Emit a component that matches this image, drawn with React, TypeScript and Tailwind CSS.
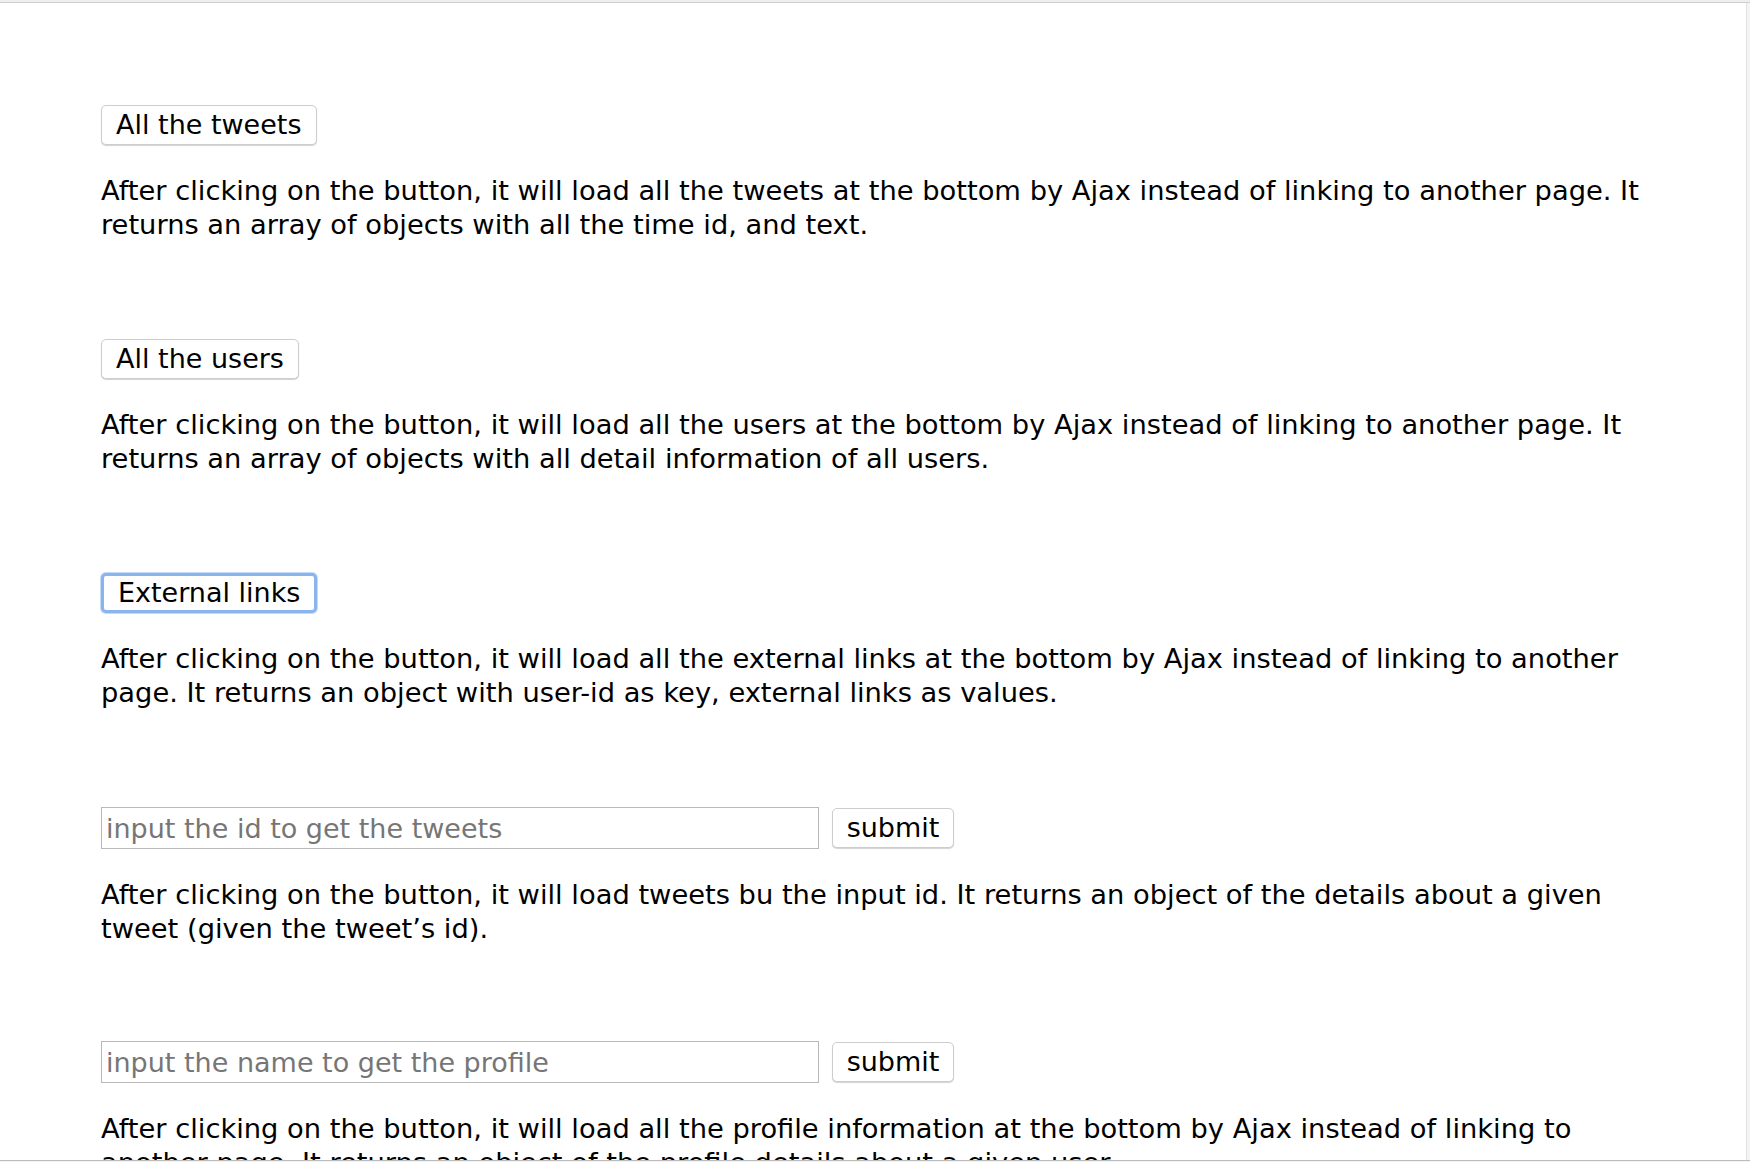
import React from "react";

const font = { fontFamily: '"DejaVu Sans", "Lucida Grande", Verdana, sans-serif' };

const Btn: React.FC<{ label: string; focused?: boolean }> = ({ label, focused }) => (
  <button
    className={
      "h-[40px] rounded-[5px] bg-white px-[14px] pb-[1px] text-[27px] leading-none text-black " +
      (focused
        ? "border-[3px] border-[#8ab4ee] px-[12px] shadow-[0_0_0_1px_#c4daf7]"
        : "border border-[#cdcdcd] shadow-[0_1px_1px_rgba(0,0,0,0.18)]")
    }
  >
    {label}
  </button>
);

const Desc: React.FC<{ children: React.ReactNode }> = ({ children }) => (
  <p className="mt-[29px] w-[1560px] text-[27.3px] leading-[34px] text-black">{children}</p>
);

const Section: React.FC<{ top: React.ReactNode; text: string }> = ({ top, text }) => (
  <section className="h-[234px] shrink-0">
    {top}
    <Desc>{text}</Desc>
  </section>
);

const InputRow: React.FC<{ placeholder: string }> = ({ placeholder }) => (
  <div className="flex items-center gap-[13px]">
    <input
      className="h-[42px] w-[718px] border border-[#b9b9b9] bg-white px-[4px] text-[27px] text-black outline-none placeholder:text-[#767676]"
      placeholder={placeholder}
      style={font}
    />
    <button
      className="h-[40px] w-[122px] rounded-[5px] border border-[#cdcdcd] bg-white pb-[1px] text-[27px] leading-none text-black shadow-[0_1px_1px_rgba(0,0,0,0.18)]"
      style={font}
    >
      submit
    </button>
  </div>
);

export default function App() {
  return (
    <div className="flex h-[1162px] w-[1750px] flex-col overflow-hidden bg-white" style={font}>
      {/* window top edge */}
      <div className="h-[3px] shrink-0 border-b border-[#cfcfcf] bg-[#efefef]" />
      <div className="flex min-h-0 flex-1">
        <main className="min-w-0 flex-1 overflow-hidden pl-[101px] pt-[102px]">
          <div className="flex flex-col">
            <Section
              top={<Btn label="All the tweets" />}
              text="After clicking on the button, it will load all the tweets at the bottom by Ajax instead of linking to another page. It returns an array of objects with all the time id, and text."
            />
            <Section
              top={<Btn label="All the users" />}
              text="After clicking on the button, it will load all the users at the bottom by Ajax instead of linking to another page. It returns an array of objects with all detail information of all users."
            />
            <Section
              top={<Btn label="External links" focused />}
              text="After clicking on the button, it will load all the external links at the bottom by Ajax instead of linking to another page. It returns an object with user-id as key, external links as values."
            />
            <Section
              top={<InputRow placeholder="input the id to get the tweets" />}
              text="After clicking on the button, it will load tweets bu the input id. It returns an object of the details about a given tweet (given the tweet’s id)."
            />
            <Section
              top={<InputRow placeholder="input the name to get the profile" />}
              text="After clicking on the button, it will load all the profile information at the bottom by Ajax instead of linking to another page. It returns an object of the profile details about a given user."
            />
          </div>
        </main>
        {/* scrollbar track */}
        <div className="w-[4px] shrink-0 border-l border-[#e2e2e2] bg-[#f4f4f4]" />
      </div>
      <div className="h-[1px] shrink-0 bg-[#bdbdbd]" />
      <div className="h-[1px] shrink-0 bg-[#f2f2f2]" />
    </div>
  );
}
